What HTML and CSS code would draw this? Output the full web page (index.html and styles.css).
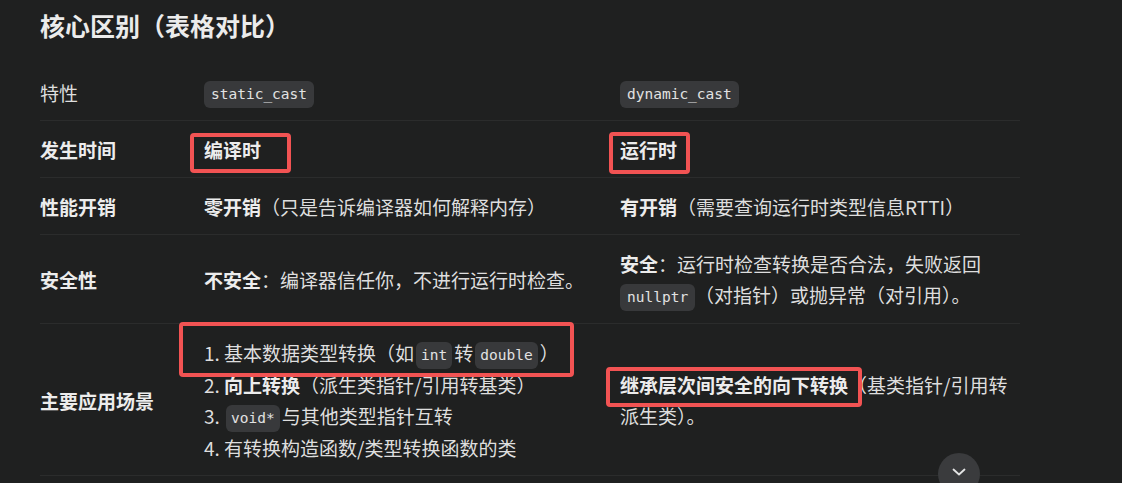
FILE: index.html
```html
<!DOCTYPE html>
<html>

<head>
  <meta charset="utf-8">
  <title>核心区别（表格对比）</title>
  <link rel="stylesheet" href="styles.css">
</head>

<body>
  <div class="page">
    <h2 class="title">核心区别（表格对比）</h2>

    <table class="cmp">
      <thead>
        <tr>
          <th class="c1">特性</th>
          <th class="c2"><code>static_cast</code></th>
          <th class="c3"><code>dynamic_cast</code></th>
        </tr>
      </thead>
      <tbody>
        <tr>
          <td><b>发生时间</b></td>
          <td><b>编译时</b></td>
          <td><b>运行时</b></td>
        </tr>
        <tr>
          <td><b>性能开销</b></td>
          <td><b>零开销</b>（只是告诉编译器如何解释内存）</td>
          <td><b>有开销</b>（需要查询运行时类型信息RTTI）</td>
        </tr>
        <tr>
          <td><b>安全性</b></td>
          <td><b>不安全</b>：编译器信任你，不进行运行时检查。</td>
          <td><b>安全</b>：运行时检查转换是否合法，失败返回 <code>nullptr</code>（对指针）或抛异常（对引用）。</td>
        </tr>
        <tr>
          <td><b>主要应用场景</b></td>
          <td>
            <div>1. 基本数据类型转换（如<code class="tight">int</code>转<code class="tight">double</code>）</div>
            <div>2. <b>向上转换</b>（派生类指针/引用转基类）</div>
            <div>3. <code class="tight">void*</code>与其他类型指针互转</div>
            <div>4. 有转换构造函数/类型转换函数的类</div>
          </td>
          <td><b>继承层次间安全的向下转换</b>（基类指针/引用转派生类）。</td>
        </tr>
      </tbody>
    </table>

    <!-- red annotation boxes -->
    <div class="mark mark_a"></div>
    <div class="mark mark_b"></div>
    <div class="mark mark_c"></div>
    <div class="mark mark_d"></div>

    <div class="scroll_down">
      <svg width="14" height="8" viewBox="0 0 14 8">
        <path d="M1.5 1.5 L7 6.5 L12.5 1.5" fill="none" stroke="#e4e4e4" stroke-width="1.8" stroke-linecap="round" stroke-linejoin="round" />
      </svg>
    </div>
  </div>
</body>

</html>
```

FILE: styles.css
```css
html,
body {
  margin: 0;
  height: 100%;
  background-color: #1f2020;
}

body {
  font-family: "Noto Sans CJK SC", "Noto Sans", sans-serif;
  color: #dedede;
  font-size: 19px;
  overflow: hidden;
}

.page {
  position: relative;
  height: 100%;
  padding-left: 40px;
}

.title {
  margin: 0;
  padding-top: 8px;
  height: 63px;
  box-sizing: border-box;
  font-size: 25px;
  line-height: 34px;
  font-weight: bold;
  color: #ebebeb;
}

.cmp {
  width: 980px;
  border-collapse: collapse;
  table-layout: fixed;
  line-height: 31px;
}

.cmp th,
.cmp td {
  box-sizing: border-box;
  padding: 13px 8px 12px 8px;
  text-align: left;
  vertical-align: middle;
  font-weight: normal;
  border-bottom: 1px solid #2b2c2c;
}

.cmp th:first-child,
.cmp td:first-child {
  padding-left: 0;
}

.cmp .c1 {
  width: 156px;
}

.cmp .c2 {
  width: 416px;
}

.cmp .c3 {
  width: 408px;
}

.cmp b {
  font-weight: bold;
  color: #ececec;
}

code {
  display: inline-block;
  font-family: "DejaVu Sans Mono", "Liberation Mono", monospace;
  font-size: 14.5px;
  line-height: 19px;
  padding: 4px 7px;
  border-radius: 6px;
  background-color: #38393b;
  color: #e2e2e2;
  vertical-align: 1px;
}

code.tight {
  padding: 4px 5px;
  margin: 0 2px;
}

.mark {
  position: absolute;
  box-sizing: border-box;
  border: 4px solid #f25353;
  border-radius: 4px;
}

.mark_a {
  left: 190px;
  top: 133px;
  width: 101px;
  height: 40px;
}

.mark_b {
  left: 609px;
  top: 132px;
  width: 81px;
  height: 42px;
}

.mark_c {
  left: 179px;
  top: 322px;
  width: 395px;
  height: 55px;
}

.mark_d {
  left: 606px;
  top: 367px;
  width: 256px;
  height: 40px;
}

.scroll_down {
  position: absolute;
  left: 938px;
  top: 453px;
  width: 42px;
  height: 42px;
  border-radius: 50%;
  background-color: #3a3b3d;
  display: flex;
  justify-content: center;
  align-items: center;
}

.scroll_down svg {
  margin-top: -4px;
}
```
